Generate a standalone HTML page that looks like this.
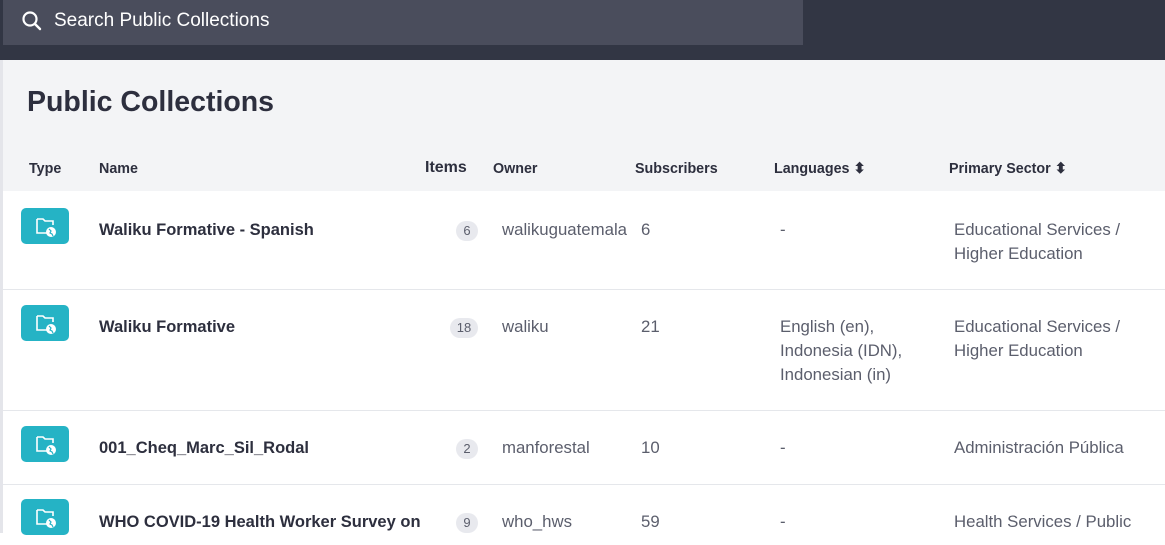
<!DOCTYPE html><html><head><style>
body{margin:0;width:1165px;height:533px;overflow:hidden;font-family:"Liberation Sans",sans-serif;background:#fff;position:relative}
.top{position:absolute;left:0;top:0;width:1165px;height:60px;background:#323644}
.search{position:absolute;left:3px;top:0;width:800px;height:45px;background:#4a4d5c;color:#fff;font-size:19px}
.search span{position:absolute;left:51px;top:10px}
.main{position:absolute;left:0;top:60px;width:1165px;height:473px;background:#f3f4f6;border-left:3px solid #e4e5ea;box-sizing:border-box}
h1{position:absolute;left:27px;top:86px;margin:0;font-size:28.5px;color:#2d2f3e;font-weight:bold}
.th{position:absolute;top:161px;font-size:14.3px;font-weight:bold;color:#2d2f3e}
.row{position:absolute;left:3px;width:1162px;background:#fff;border-bottom:1px solid #e5e7eb}
.c{position:absolute;font-size:16.8px;color:#5b5e6c;line-height:24px}
.n{font-weight:bold;color:#2d2f3e;font-size:16.5px}
.icon{position:absolute;left:21px;width:48px;height:36px;background:#25b3c5;border-radius:5px}
.badge{position:absolute;height:20px;line-height:20px;border-radius:10px;background:#e8e9ee;font-size:13px;color:#5b5e6c;text-align:center}
</style></head><body>
<div class="top"></div>
<div class="search"><svg style="position:absolute;left:19px;top:11px" width="20" height="20" viewBox="0 0 20 20"><circle cx="8" cy="8" r="6.5" fill="none" stroke="#fff" stroke-width="2.2"/><line x1="13" y1="13" x2="18" y2="18" stroke="#fff" stroke-width="2.4" stroke-linecap="round"/></svg><span>Search Public Collections</span></div>
<div class="main"></div>
<h1>Public Collections</h1>
<div class="th" style="left:29px">Type</div><div class="th" style="left:99px">Name</div><div class="th" style="left:425px;font-size:16px;top:159px">Items</div><div class="th" style="left:493px">Owner</div><div class="th" style="left:635px">Subscribers</div><div class="th" style="left:774px">Languages ⬍</div><div class="th" style="left:949px">Primary Sector ⬍</div>

<div class="row" style="top:191px;height:98px"></div>
<div class="row" style="top:290px;height:120px"></div>
<div class="row" style="top:411px;height:73px"></div>
<div class="row" style="top:485px;height:60px;border:0"></div>

<svg width="0" height="0" style="position:absolute"><defs><g id="ic"><path d="M16 11h6l2 2h8v4M16 11v14h10" fill="none" stroke="#fff" stroke-width="1.6"/><circle cx="30" cy="24" r="5" fill="#fff"/><path d="M28 21l2 2-1 2 2 1 1 2" stroke="#25b3c5" stroke-width="1.2" fill="none"/></g></defs></svg>
<div class="icon" style="top:208px"><svg width="48" height="36"><use href="#ic"/></svg></div>
<div class="icon" style="top:305px"><svg width="48" height="36"><use href="#ic"/></svg></div>
<div class="icon" style="top:426px"><svg width="48" height="36"><use href="#ic"/></svg></div>
<div class="icon" style="top:499px"><svg width="48" height="36"><use href="#ic"/></svg></div>

<div class="c n" style="left:99px;top:218px">Waliku Formative - Spanish</div>
<div class="badge" style="left:456px;top:221px;width:22px">6</div>
<div class="c" style="left:502px;top:218px">walikuguatemala</div>
<div class="c" style="left:641px;top:218px">6</div>
<div class="c" style="left:780px;top:218px">-</div>
<div class="c" style="left:954px;top:218px">Educational Services /<br>Higher Education</div>

<div class="c n" style="left:99px;top:315px">Waliku Formative</div>
<div class="badge" style="left:450px;top:318px;width:28px">18</div>
<div class="c" style="left:502px;top:315px">waliku</div>
<div class="c" style="left:641px;top:315px">21</div>
<div class="c" style="left:780px;top:315px">English (en),<br>Indonesia (IDN),<br>Indonesian (in)</div>
<div class="c" style="left:954px;top:315px">Educational Services /<br>Higher Education</div>

<div class="c n" style="left:99px;top:436px">001_Cheq_Marc_Sil_Rodal</div>
<div class="badge" style="left:456px;top:439px;width:22px">2</div>
<div class="c" style="left:502px;top:436px">manforestal</div>
<div class="c" style="left:641px;top:436px">10</div>
<div class="c" style="left:780px;top:436px">-</div>
<div class="c" style="left:954px;top:436px">Administración Pública</div>

<div class="c n" style="left:99px;top:510px">WHO COVID-19 Health Worker Survey on</div>
<div class="badge" style="left:456px;top:513px;width:22px">9</div>
<div class="c" style="left:502px;top:510px">who_hws</div>
<div class="c" style="left:641px;top:510px">59</div>
<div class="c" style="left:780px;top:510px">-</div>
<div class="c" style="left:954px;top:510px">Health Services / Public</div>
</body></html>
